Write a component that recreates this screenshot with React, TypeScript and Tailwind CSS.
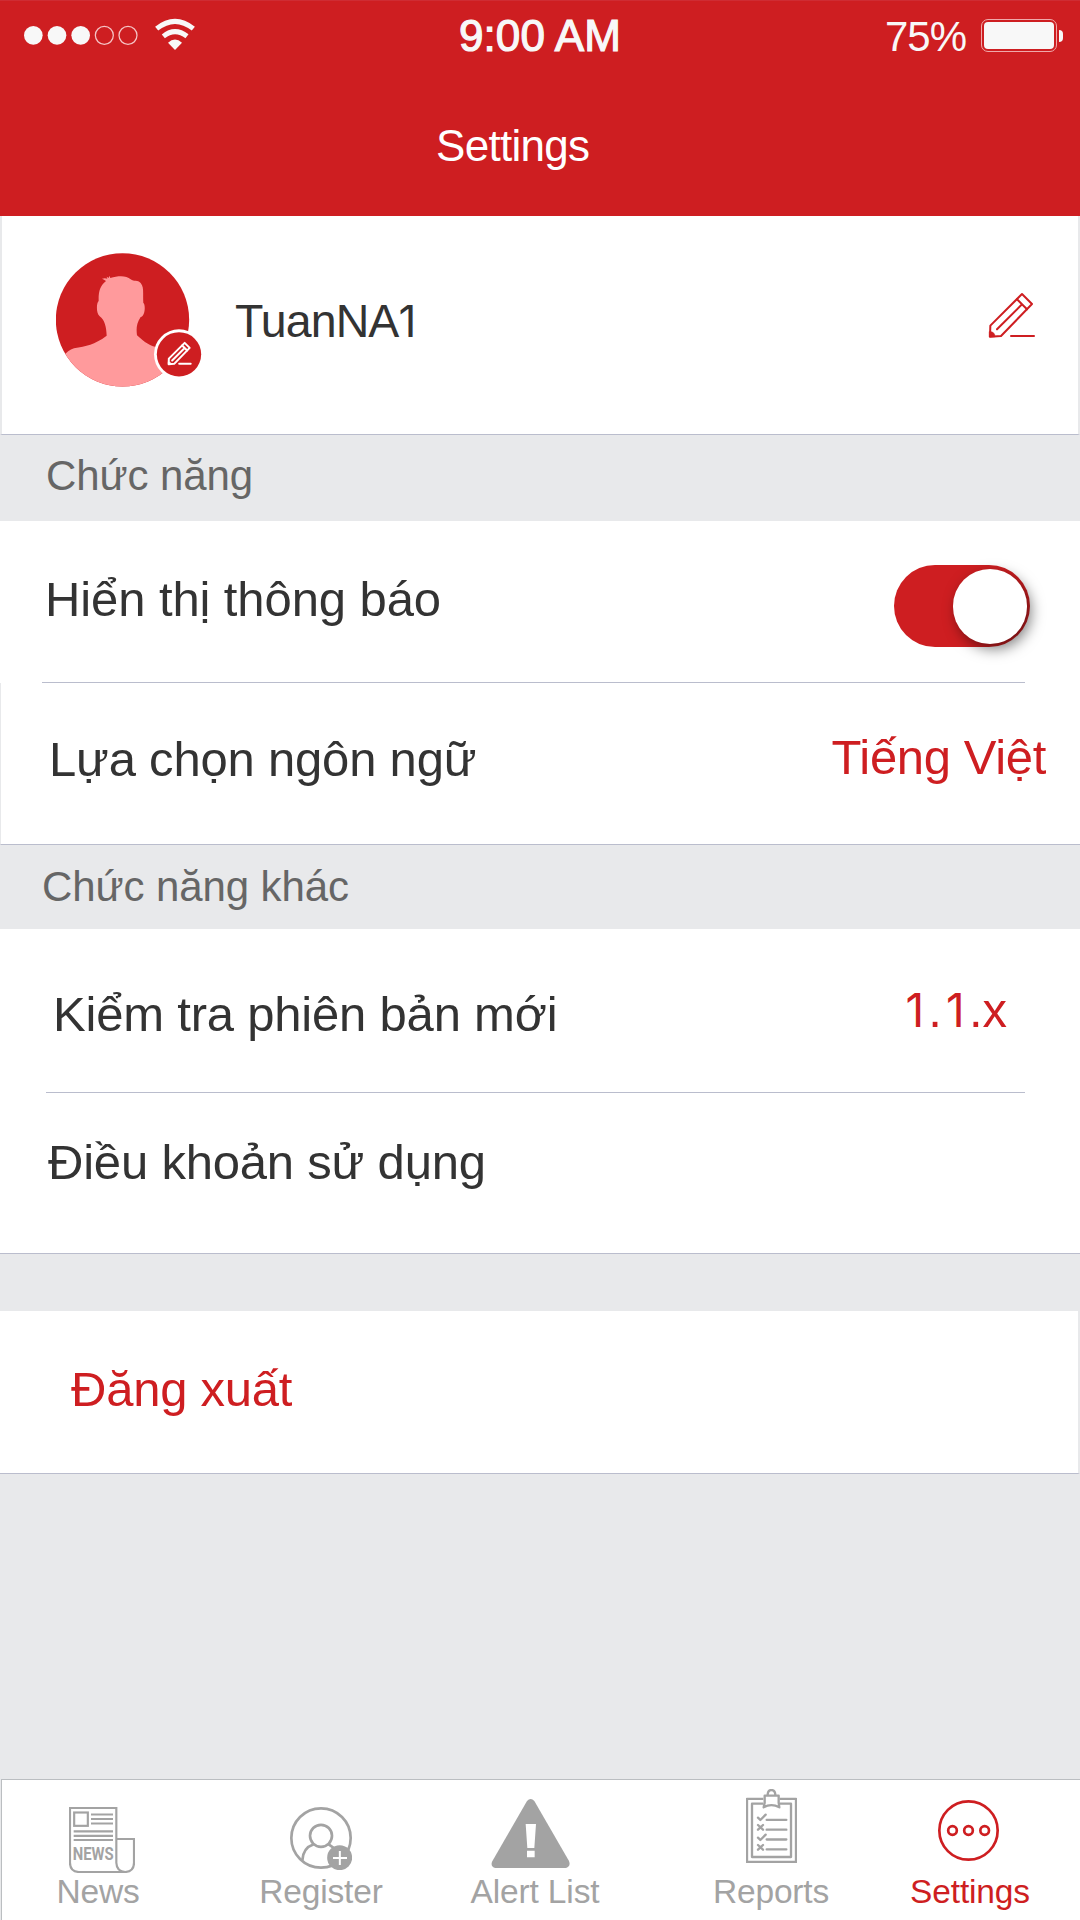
import React from "react";

const RED = "#ce1e21";
const GREY = "#a3a3a3";

function PencilPaths({ color, width }: { color: string; width: number }) {
  return (
    <g fill="none" stroke={color} strokeWidth={width} strokeLinejoin="round" strokeLinecap="round">
      <path d="M546 102 L576 132 L483 228 L450 230 L451 197 Z" />
      <path d="M531 118 L561 148 M546 133 L471 208" />
      <path d="M449 215 Q464 214 465 230 L449 231 Z" fill={color} strokeWidth={2} />
      <path d="M513 228 H582" />
    </g>
  );
}

function StatusSignal() {
  return (
    <svg className="ml-[23px] mt-[17px] block h-[35px] w-[174px]" viewBox="69 51 522 105">
      <g fill="#f8f8f8">
        <circle cx="100" cy="106" r="28" />
        <circle cx="171" cy="106" r="28" />
        <circle cx="242" cy="106" r="28" />
      </g>
      <g fill="none" stroke="#f5c4c5" strokeWidth="3.8">
        <circle cx="313" cy="106" r="27" />
        <circle cx="384" cy="106" r="27" />
      </g>
      <g fill="none" stroke="#f8f8f8" strokeWidth="15">
        <path d="M470 86 Q525 42 580 86" />
        <path d="M490 109 Q525 81 561 109" />
      </g>
      <path d="M504 128 Q525 109 546 128 L525 150 Z" fill="#f8f8f8" />
    </svg>
  );
}

function Battery() {
  return (
    <div className="ml-[15px] mt-[19px] flex items-center">
      <div className="h-[33px] w-[76px] rounded-[7px] border border-[#f0a9aa] p-[2px]">
        <div className="h-[27px] w-[70px] rounded-[4px] bg-[#f8f8f8]" />
      </div>
      <div className="ml-[2px] h-[12px] w-[4px] rounded-r-full bg-[#f8f8f8]" />
    </div>
  );
}

function Avatar() {
  return (
    <svg className="ml-[54px] mt-[37px] block h-[134px] w-[148px] shrink-0" viewBox="168 129 444 402">
      <defs>
        <clipPath id="face">
          <circle cx="367.5" cy="329.5" r="200" />
        </clipPath>
      </defs>
      <circle cx="367.5" cy="329.5" r="200" fill={RED} />
      <path
        clipPath="url(#face)"
        fill="#ff9a9c"
        d="M190 440 Q203 420 222 415 C260 408 282 405 320 377 C319 350 314 330 299 319 C288 312 289 278 296 273 C295 245 300 228 318 213 Q312 208 306 206 Q315 204 322 206 L320 200 L326 204 L328 197 L331 204 C355 197 379 196 392 208 C402 216 413 209 422 219 C433 232 428 250 430 279 C437 282 436 320 422 321 C408 343 409 358 411 376 C435 398 448 408 480 414 L560 440 V540 H190 Z"
      />
      <circle cx="537" cy="433" r="75" fill="#fff" />
      <circle cx="537" cy="433" r="66.5" fill={RED} />
      <g transform="translate(281 347.5) scale(.5)">
        <PencilPaths color="#fff" width={12} />
      </g>
    </svg>
  );
}

function NewsIcon() {
  return (
    <svg className="ml-[7px] mt-[27px] block h-[66px] w-[66px] shrink-0" viewBox="207 111 198 198">
      <g fill="none" stroke={GREY} strokeWidth="6.5">
        <path d="M377 306 H236 Q210 304 210 278 V114 H349 V278 Q350 304 376 306 Q402 304 402 278 V207 H349" />
        <rect x="222.500" y="127.500" width="41" height="40" />
        <path d="M273 133.500 H339 M273 147 H339 M273 160.500 H339 M221 184 H339 M221 197.500 H339 M221 210 H339" />
      </g>
      <text x="218" y="269" fill={GREY} fontFamily="Roboto" fontWeight="700" fontSize="54" textLength="123" lengthAdjust="spacingAndGlyphs">
        NEWS
      </text>
    </svg>
  );
}

function RegisterIcon() {
  return (
    <svg className="mt-[27px] block h-[63px] w-[62px] shrink-0" viewBox="150 111 186 189">
      <g fill="none" stroke={GREY} strokeWidth="8">
        <circle cx="243" cy="204" r="89" />
        <circle cx="243" cy="197.500" r="33" />
        <path d="M187 271 Q189 234 221 223 M266 223 L290 240" />
      </g>
      <circle cx="299" cy="263" r="37.500" fill={GREY} />
      <path d="M279 264 H321 M299.500 243 V285" stroke="#fff" strokeWidth="6" />
    </svg>
  );
}

function AlertIcon() {
  return (
    <svg className="mr-[10px] mt-[19px] block h-[69px] w-[79px] shrink-0" viewBox="751 87 237 207">
      <path
        fill={GREY}
        d="M859 93 Q870 81 881 93 L985 273 Q991 289 976 294 H764 Q749 290 754 275 Z"
      />
      <path d="M855 162 H886 L881 234 H860 Z M859 242 H882 V262 H859 Z" fill="#fff" />
    </svg>
  );
}

function ReportsIcon() {
  return (
    <svg className="mt-[9px] block h-[74px] w-[51px] shrink-0" viewBox="198 57 153 222">
      <g fill="none" stroke={GREY} strokeWidth="7" strokeLinejoin="round">
        <path d="M250 86.500 H201 V276 H348 V86.500 H299" />
        <path d="M250 101 H216 V261 H333 V101 H299" />
        <path d="M263 76 Q263 60 274 60 Q286 60 286 76" />
        <path d="M254 77 H296 V98 L298 112 Q274 99 251 112 L254 98 Z" />
        <g strokeLinecap="round">
          <path d="M260 149.500 H319 M260 179 H319 M260 208.500 H319 M260 238 H319" />
          <path d="M234 143 L241 150 L257 134 M234 203 L241 210 L257 194" />
          <path d="M234 165 L249 179 M249 165 L234 179 M234 225 L249 239 M249 225 L234 239" />
        </g>
      </g>
    </svg>
  );
}

function SettingsIcon() {
  return (
    <svg className="mr-[4px] mt-[20px] block h-[61px] w-[61px] shrink-0" viewBox="774 90 183 183">
      <g fill="none" stroke={RED} strokeWidth="8">
        <circle cx="865.500" cy="181.500" r="87.500" />
        <circle cx="817.500" cy="181.500" r="13" />
        <circle cx="865.500" cy="181.500" r="13" />
        <circle cx="914" cy="181.500" r="13" />
      </g>
    </svg>
  );
}

function Tab({ icon, label, className }: { icon: React.ReactNode; label: string; className: string }) {
  return (
    <button className={"flex w-[130px] shrink-0 flex-col items-center " + className}>
      <span className="flex h-[92px] items-start">{icon}</span>
      <span className="whitespace-nowrap text-[33.5px] leading-[40px] tracking-[-0.15px]">{label}</span>
    </button>
  );
}

export default function App() {
  return (
    <div className="flex h-[1920px] w-[1080px] flex-col overflow-hidden bg-[#e8e9eb] font-['Liberation_Sans',Arial,sans-serif] text-[#333333]">
      <header className="h-[216px] shrink-0 border-t border-[#cf2c33] bg-[#ce1e21] text-white">
        <div className="-mt-px grid h-[72px] grid-cols-3 text-[#f8f8f8]">
          <StatusSignal />
          <div className="mt-[6px] text-center text-[44px] leading-[60px] tracking-[0.1px] [-webkit-text-stroke:1.2px_#f8f8f8]">
            9:00 AM
          </div>
          <div className="flex items-start justify-end pr-[17px]">
            <span className="mt-[7px] text-[42px] leading-[60px] tracking-[-1px]">75%</span>
            <Battery />
          </div>
        </div>
        <h1 className="ml-[436px] mt-[44px] text-[44px] leading-[60px] tracking-[-0.7px]">Settings</h1>
      </header>

      <section className="flex h-[219px] shrink-0 items-start border-x-2 border-b border-x-[#e8e9eb] border-b-[#babdcd] bg-white">
        <Avatar />
        <div className="ml-[31px] mt-[75px] flex items-baseline text-[46.5px] leading-[60px] tracking-[-0.9px]">
          <span>TuanNA</span>
          <span className="font-['Inter'] text-[44px] tracking-[-1px]">1</span>
        </div>
        <svg className="ml-auto mr-[42px] mt-[76px] h-[46.667px] w-[48px]" viewBox="444 96 144 140">
          <PencilPaths color={RED} width={6} />
        </svg>
      </section>

      <h2 className="h-[86px] shrink-0 pl-[46px] pt-[11px] text-[42px] leading-[60px] tracking-[-0.1px] text-[#666666]">Chức năng</h2>

      <section className="h-[162px] shrink-0 bg-white">
        <div className="mr-[55px] ml-[42px] flex h-[162px] items-start justify-between border-b border-[#babdcd]">
          <span className="ml-[3px] mt-[48px] text-[49px] leading-[60px] tracking-[-0.1px]">Hiển thị thông báo</span>
          <span className="-mr-[5px] mt-[44px] flex h-[82px] w-[136px] justify-end rounded-full bg-[#ce1e21] pr-[3px] pt-[4px]">
            <span className="block size-[74.5px] rounded-full bg-white shadow-[4px_5px_14px_rgba(0,0,0,0.5)]" />
          </span>
        </div>
      </section>

      <section className="flex h-[162px] shrink-0 items-start justify-between border-b border-l border-b-[#babdcd] border-l-[#e8e9eb] bg-white pl-[48px] pr-[34px]">
        <span className="mt-[46px] text-[49px] leading-[60px] tracking-[-0.2px]">Lựa chọn ngôn ngữ</span>
        <span className="mt-[44px] text-[49px] leading-[60px] tracking-[-0.35px] text-[#ce1e21]">Tiếng Việt</span>
      </section>

      <h2 className="h-[84px] shrink-0 pl-[42px] pt-[12px] text-[42px] leading-[60px] tracking-[-0.1px] text-[#666666]">Chức năng khác</h2>

      <section className="shrink-0 border-b border-[#babdcd] bg-white">
        <div className="mr-[55px] ml-[46px] flex h-[164px] items-start justify-between border-b border-[#babdcd]">
          <span className="ml-[7px] mt-[55px] text-[49px] leading-[60px] tracking-[-0.2px]">Kiểm tra phiên bản mới</span>
          <span className="mr-[18px] mt-[51px] text-[49px] leading-[60px] text-[#ce1e21]">
            <span className="inline-block w-[27px] text-center font-['Inter'] text-[46px]">1</span>.
            <span className="inline-block w-[27px] text-center font-['Inter'] text-[46px]">1</span>.x
          </span>
        </div>
        <div className="h-[160px] pl-[48px] pt-[39px] text-[49px] leading-[60px] tracking-[-0.2px]">Điều khoản sử dụng</div>
      </section>

      <button className="mt-[57px] block h-[163px] shrink-0 border-b border-r-2 border-b-[#babdcd] border-r-[#e8e9eb] bg-white pl-[71px] pb-[7px] text-left text-[49px] leading-[60px] tracking-[-0.25px] text-[#ce1e21]">
        Đăng xuất
      </button>

      <nav className="ml-px mt-auto flex h-[141px] shrink-0 border-l border-t border-[#bbbec1] bg-white text-[#a3a3a3]">
        <Tab icon={<NewsIcon />} label="News" className="ml-[31px]" />
        <Tab icon={<RegisterIcon />} label="Register" className="ml-[93px]" />
        <Tab icon={<AlertIcon />} label="Alert List" className="ml-[84px]" />
        <Tab icon={<ReportsIcon />} label="Reports" className="ml-[106px]" />
        <Tab icon={<SettingsIcon />} label="Settings" className="ml-[69px] text-[#ce1e21]" />
      </nav>
    </div>
  );
}
